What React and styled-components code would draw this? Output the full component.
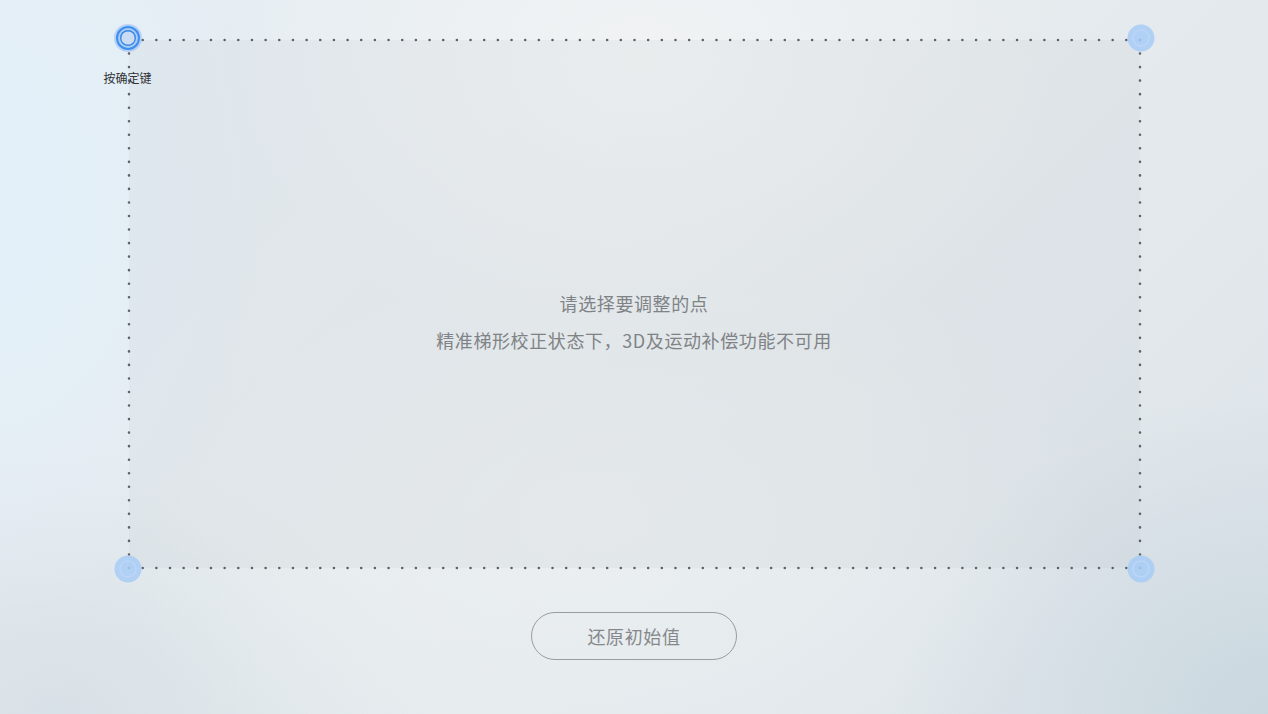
import React from 'react';
import styled, { createGlobalStyle } from 'styled-components';

const GlobalStyle = createGlobalStyle`
  html, body {
    margin: 0;
    padding: 0;
  }
  body {
    font-family: "Noto Sans CJK SC", "Noto Sans", sans-serif;
  }
`;

const FRAME_W = 1011;
const FRAME_H = 528;

const DottedOutline = () => (
  <Outline width={FRAME_W + 4} height={FRAME_H + 4} viewBox={`-2 -2 ${FRAME_W + 4} ${FRAME_H + 4}`}>
    <g stroke="#5e6367" strokeWidth="2.6" strokeLinecap="round" fill="none">
      <line x1="0" y1="0" x2={FRAME_W} y2="0" strokeDasharray={`0 ${FRAME_W / 74}`} />
      <line x1="0" y1={FRAME_H} x2={FRAME_W} y2={FRAME_H} strokeDasharray={`0 ${FRAME_W / 74}`} />
      <line x1="0" y1="0" x2="0" y2={FRAME_H} strokeDasharray={`0 ${FRAME_H / 39}`} />
      <line x1={FRAME_W} y1="0" x2={FRAME_W} y2={FRAME_H} strokeDasharray={`0 ${FRAME_H / 39}`} />
    </g>
  </Outline>
);

const ActiveDot = () => (
  <svg width="30" height="30" viewBox="0 0 30 30">
    <circle cx="15" cy="15" r="14" fill="#8fbaf5" opacity="0.55" />
    <circle cx="15" cy="15" r="12" fill="#3d8ef0" />
    <circle cx="15" cy="15" r="10" fill="#a9cdf7" />
    <circle cx="15" cy="15" r="8" fill="#3a86ea" />
    <circle cx="15" cy="15" r="6.6" fill="#c9dcf2" />
  </svg>
);

const IdleDot = () => (
  <svg width="30" height="30" viewBox="0 0 30 30">
    <circle cx="15" cy="15" r="13.5" fill="#a7cbf6" opacity="0.85" />
    <circle cx="15" cy="15" r="8" fill="none" stroke="#bcd6f6" strokeWidth="1.5" />
  </svg>
);

export default function App() {
  return (
    <>
      <GlobalStyle />
      <Screen>
        <Frame>
          <DottedOutline />
          <Corner $x="left" $y="top">
            <ActiveDot />
            <HandleLabel>按确定键</HandleLabel>
          </Corner>
          <Corner $x="right" $y="top"><IdleDot /></Corner>
          <Corner $x="left" $y="bottom"><IdleDot /></Corner>
          <Corner $x="right" $y="bottom"><IdleDot /></Corner>
          <Message>请选择要调整的点</Message>
          <Message>精准梯形校正状态下，3D及运动补偿功能不可用</Message>
        </Frame>
        <ResetButton type="button">还原初始值</ResetButton>
      </Screen>
    </>
  );
}

const Screen = styled.div`
  width: 1268px;
  height: 714px;
  overflow: hidden;
  box-sizing: border-box;
  padding-top: 40px;
  display: flex;
  flex-direction: column;
  align-items: center;
  background:
    radial-gradient(ellipse 260px 420px at 0px 200px, rgba(226, 240, 250, 0.95), rgba(226, 240, 250, 0) 100%),
    radial-gradient(ellipse 420px 300px at 640px 60px, rgba(242, 244, 244, 0.9), rgba(242, 244, 244, 0) 100%),
    radial-gradient(ellipse 500px 300px at 600px 520px, rgba(236, 240, 242, 0.8), rgba(236, 240, 242, 0) 100%),
    radial-gradient(ellipse 380px 320px at 1268px 714px, rgba(200, 214, 222, 0.9), rgba(200, 214, 222, 0) 100%),
    radial-gradient(ellipse 360px 260px at 60px 714px, rgba(212, 222, 228, 0.8), rgba(212, 222, 228, 0) 100%),
    linear-gradient(135deg, #e6eef4 0%, #e7ecef 45%, #dde4e9 100%);
`;

const Frame = styled.div`
  position: relative;
  width: ${FRAME_W}px;
  height: ${FRAME_H}px;
  flex-shrink: 0;
  display: flex;
  flex-direction: column;
  align-items: center;
  justify-content: center;
  gap: 12px;
  padding-top: 36px;
  box-sizing: border-box;
  background: rgba(190, 200, 208, 0.16);
`;

const Outline = styled.svg`
  position: absolute;
  left: -2px;
  top: -2px;
  pointer-events: none;
`;

const Corner = styled.div`
  position: absolute;
  ${p => (p.$x === 'left' ? 'left: -16px;' : 'right: -16px;')}
  ${p => (p.$y === 'top' ? 'top: -17px;' : 'bottom: -16px;')}
  width: 30px;
  height: 30px;

  svg {
    display: block;
  }
`;

const HandleLabel = styled.div`
  position: absolute;
  top: 47px;
  left: 50%;
  transform: translateX(-50%);
  white-space: nowrap;
  font-size: 12px;
  line-height: 16px;
  color: #2f3235;
`;

const Message = styled.p`
  margin: 0;
  font-size: 18px;
  line-height: 25px;
  color: #808386;
  letter-spacing: 0.6px;
`;

const ResetButton = styled.button`
  margin-top: 44px;
  width: 206px;
  height: 48px;
  border: 1.5px solid #9a9da0;
  border-radius: 24px;
  background: transparent;
  font-family: "Noto Sans CJK SC", "Noto Sans", sans-serif;
  font-size: 18px;
  color: #85888b;
  letter-spacing: 0.6px;
  cursor: pointer;
`;
